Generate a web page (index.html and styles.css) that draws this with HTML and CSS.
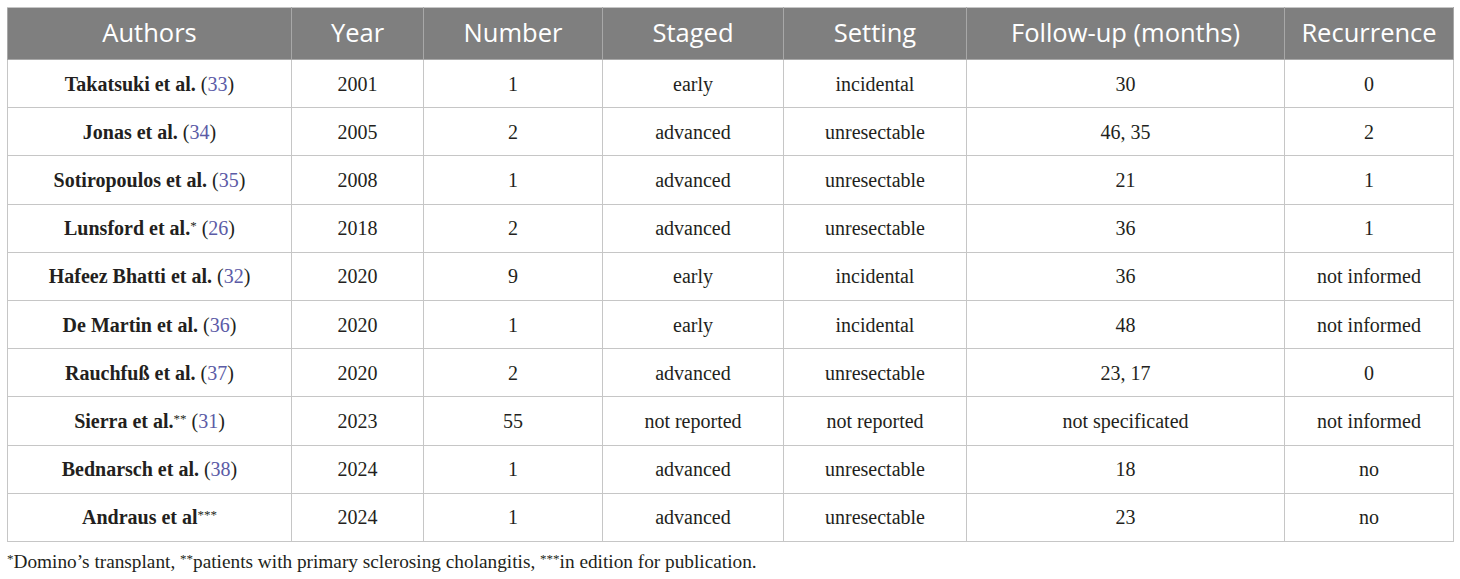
FILE: index.html
```html
<!DOCTYPE html>
<html>
<head>
<meta charset="utf-8">
<link rel="stylesheet" href="styles.css">
</head>
<body>
<div class="wrap">
<table class="data">
<colgroup>
<col class="c1"><col class="c2"><col class="c3"><col class="c4"><col class="c5"><col class="c6"><col class="c7">
</colgroup>
<thead>
<tr><th>Authors</th><th>Year</th><th>Number</th><th>Staged</th><th>Setting</th><th>Follow-up (months)</th><th>Recurrence</th></tr>
</thead>
<tbody>
<tr><td><b>Takatsuki et al.</b> (<a class="ref">33</a>)</td><td>2001</td><td>1</td><td>early</td><td>incidental</td><td>30</td><td>0</td></tr>
<tr><td><b>Jonas et al.</b> (<a class="ref">34</a>)</td><td>2005</td><td>2</td><td>advanced</td><td>unresectable</td><td>46, 35</td><td>2</td></tr>
<tr><td><b>Sotiropoulos et al.</b> (<a class="ref">35</a>)</td><td>2008</td><td>1</td><td>advanced</td><td>unresectable</td><td>21</td><td>1</td></tr>
<tr><td><b>Lunsford et al.</b><sup>*</sup> (<a class="ref">26</a>)</td><td>2018</td><td>2</td><td>advanced</td><td>unresectable</td><td>36</td><td>1</td></tr>
<tr><td><b>Hafeez Bhatti et al.</b> (<a class="ref">32</a>)</td><td>2020</td><td>9</td><td>early</td><td>incidental</td><td>36</td><td>not informed</td></tr>
<tr><td><b>De Martin et al.</b> (<a class="ref">36</a>)</td><td>2020</td><td>1</td><td>early</td><td>incidental</td><td>48</td><td>not informed</td></tr>
<tr><td><b>Rauchfuß et al.</b> (<a class="ref">37</a>)</td><td>2020</td><td>2</td><td>advanced</td><td>unresectable</td><td>23, 17</td><td>0</td></tr>
<tr><td><b>Sierra et al.</b><sup>**</sup> (<a class="ref">31</a>)</td><td>2023</td><td>55</td><td>not reported</td><td>not reported</td><td>not specificated</td><td>not informed</td></tr>
<tr><td><b>Bednarsch et al.</b> (<a class="ref">38</a>)</td><td>2024</td><td>1</td><td>advanced</td><td>unresectable</td><td>18</td><td>no</td></tr>
<tr><td><b>Andraus et al</b><sup>***</sup></td><td>2024</td><td>1</td><td>advanced</td><td>unresectable</td><td>23</td><td>no</td></tr>
</tbody>
</table>
<p class="note"><sup>*</sup>Domino’s transplant, <sup>**</sup>patients with primary sclerosing cholangitis, <sup>***</sup>in edition for publication.</p>
</div>
</body>
</html>
```
FILE: styles.css
```css
html, body {
  margin: 0;
  padding: 0;
  background: #ffffff;
}
.wrap {
  padding: 7px 0 0 7px;
}
.data {
  border-collapse: collapse;
  table-layout: fixed;
  width: 1446px;
  font-family: "Liberation Serif", "Times New Roman", serif;
  font-size: 20px;
  color: #231f20;
}
.c1 { width: 284px; }
.c2 { width: 132px; }
.c3 { width: 179px; }
.c4 { width: 181px; }
.c5 { width: 183px; }
.c6 { width: 318px; }
.c7 { width: 169px; }
.data th {
  background: #7f7f7f;
  color: #ffffff;
  font-family: "Open Sans", "DejaVu Sans", sans-serif;
  font-weight: 400;
  font-size: 25.5px;
  line-height: 30px;
  height: 48px;
  padding: 0 0 3px 0;
  border: 1px solid #a8a8a8;
  border-top-color: #c6c6c6;
  text-align: center;
  vertical-align: middle;
}
.data td {
  height: 47.2px;
  padding: 0 4px;
  line-height: 22px;
  border: 1px solid #c6c6c6;
  text-align: center;
  vertical-align: middle;
}
.data b {
  font-weight: 700;
}
.ref {
  color: #5b5ba6;
  text-decoration: none;
}
.data sup, .note sup {
  font-size: 13px;
  line-height: 0;
  vertical-align: 5px;
}
.note {
  margin: 9px 0 0 0;
  font-family: "Liberation Serif", "Times New Roman", serif;
  font-size: 19.3px;
  line-height: 22px;
  color: #231f20;
}
```
